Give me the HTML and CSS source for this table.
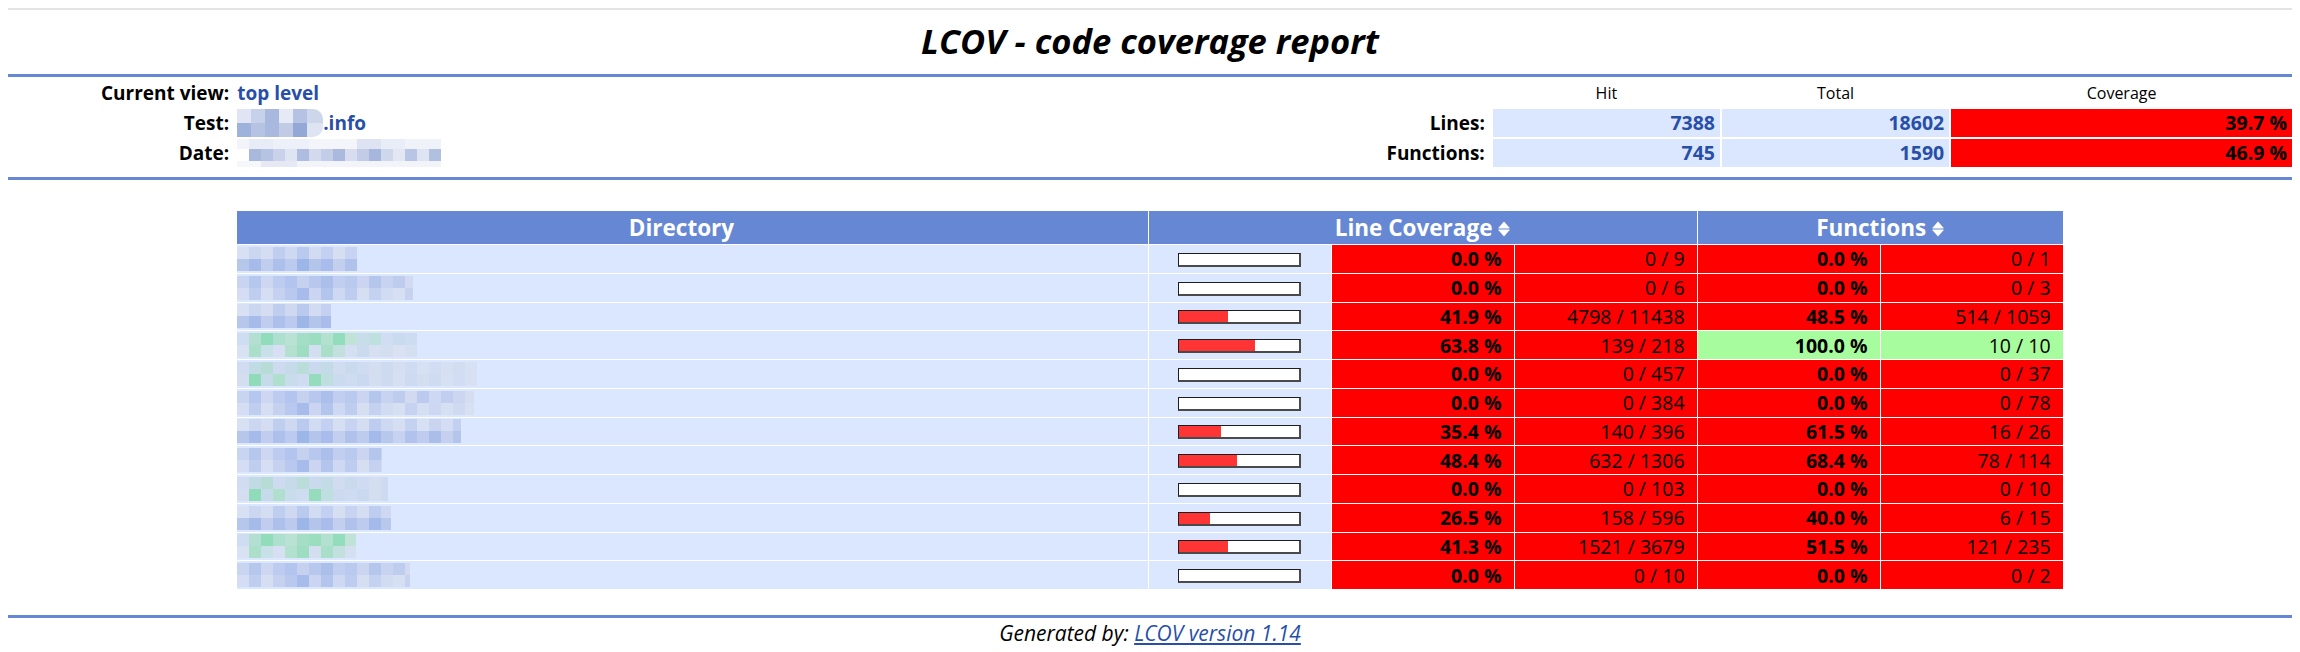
FILE: index.html
```html
<!DOCTYPE html>
<html lang="en">
<head>
<meta charset="utf-8">
<title>LCOV - code coverage report</title>
<link rel="stylesheet" href="styles.css">
</head>
<body>
<div class="topline"></div>
<h1 class="title">LCOV - code coverage report</h1>
<div class="ruler"></div>
<div class="header">
  <div class="hitem">Current view:</div>
  <div class="hvalue"><a class="hlink" href="#">top level</a></div>
  <div></div>
  <div></div>
  <div class="covhead">Hit</div>
  <div class="covhead">Total</div>
  <div class="covhead">Coverage</div>

  <div class="hitem">Test:</div>
  <div class="hvalue"><span class="mz mz-test"></span>.info</div>
  <div></div>
  <div class="hitem">Lines:</div>
  <div class="coventry">7388</div>
  <div class="coventry">18602</div>
  <div class="coventry lo">39.7 %</div>

  <div class="hitem">Date:</div>
  <div class="hvalue"><span class="mz mz-date"></span></div>
  <div></div>
  <div class="hitem">Functions:</div>
  <div class="coventry">745</div>
  <div class="coventry">1590</div>
  <div class="coventry lo">46.9 %</div>
</div>
<div class="ruler ruler-low"></div>

<table class="cov">
  <colgroup>
    <col class="c-dir"><col class="c-ten"><col class="c-ten"><col class="c-ten"><col class="c-ten"><col class="c-ten">
  </colgroup>
  <thead>
    <tr>
      <th class="th-dir">Directory</th>
      <th colspan="3">Line Coverage <svg class="sort" viewBox="0 0 12 16" width="12" height="16"><path d="M6 0.5 L11.5 6.8 Q12 7.5 11 7.5 H1 Q0 7.5 0.5 6.8 Z"/><path d="M1 8.5 H11 Q12 8.5 11.5 9.2 L6 15.5 L0.5 9.2 Q0 8.5 1 8.5 Z"/></svg></th>
      <th colspan="2">Functions <svg class="sort" viewBox="0 0 12 16" width="12" height="16"><path d="M6 0.5 L11.5 6.8 Q12 7.5 11 7.5 H1 Q0 7.5 0.5 6.8 Z"/><path d="M1 8.5 H11 Q12 8.5 11.5 9.2 L6 15.5 L0.5 9.2 Q0 8.5 1 8.5 Z"/></svg></th>
    </tr>
  </thead>
  <tbody>
    <tr><td class="file"><span class="mz mz-a w1"></span></td><td class="bar"><div class="barbox"><div class="fill" style="width:0%"></div></div></td><td class="per lo">0.0 %</td><td class="num lo">0 / 9</td><td class="per lo">0.0 %</td><td class="num lo">0 / 1</td></tr>
    <tr><td class="file"><span class="mz mz-b w2"></span></td><td class="bar"><div class="barbox"><div class="fill" style="width:0%"></div></div></td><td class="per lo">0.0 %</td><td class="num lo">0 / 6</td><td class="per lo">0.0 %</td><td class="num lo">0 / 3</td></tr>
    <tr><td class="file"><span class="mz mz-a w3"></span></td><td class="bar"><div class="barbox"><div class="fill" style="width:41%"></div></div></td><td class="per lo">41.9 %</td><td class="num lo">4798 / 11438</td><td class="per lo">48.5 %</td><td class="num lo">514 / 1059</td></tr>
    <tr><td class="file"><span class="mz mz-g w4"></span></td><td class="bar"><div class="barbox"><div class="fill" style="width:63%"></div></div></td><td class="per lo">63.8 %</td><td class="num lo">139 / 218</td><td class="per hi">100.0 %</td><td class="num hi">10 / 10</td></tr>
    <tr><td class="file"><span class="mz mz-h w5"></span></td><td class="bar"><div class="barbox"><div class="fill" style="width:0%"></div></div></td><td class="per lo">0.0 %</td><td class="num lo">0 / 457</td><td class="per lo">0.0 %</td><td class="num lo">0 / 37</td></tr>
    <tr><td class="file"><span class="mz mz-b w6"></span></td><td class="bar"><div class="barbox"><div class="fill" style="width:0%"></div></div></td><td class="per lo">0.0 %</td><td class="num lo">0 / 384</td><td class="per lo">0.0 %</td><td class="num lo">0 / 78</td></tr>
    <tr><td class="file"><span class="mz mz-a w7"></span></td><td class="bar"><div class="barbox"><div class="fill" style="width:35%"></div></div></td><td class="per lo">35.4 %</td><td class="num lo">140 / 396</td><td class="per lo">61.5 %</td><td class="num lo">16 / 26</td></tr>
    <tr><td class="file"><span class="mz mz-b w8"></span></td><td class="bar"><div class="barbox"><div class="fill" style="width:48%"></div></div></td><td class="per lo">48.4 %</td><td class="num lo">632 / 1306</td><td class="per lo">68.4 %</td><td class="num lo">78 / 114</td></tr>
    <tr><td class="file"><span class="mz mz-h w9"></span></td><td class="bar"><div class="barbox"><div class="fill" style="width:0%"></div></div></td><td class="per lo">0.0 %</td><td class="num lo">0 / 103</td><td class="per lo">0.0 %</td><td class="num lo">0 / 10</td></tr>
    <tr><td class="file"><span class="mz mz-a w10"></span></td><td class="bar"><div class="barbox"><div class="fill" style="width:26%"></div></div></td><td class="per lo">26.5 %</td><td class="num lo">158 / 596</td><td class="per lo">40.0 %</td><td class="num lo">6 / 15</td></tr>
    <tr><td class="file"><span class="mz mz-g w11"></span></td><td class="bar"><div class="barbox"><div class="fill" style="width:41%"></div></div></td><td class="per lo">41.3 %</td><td class="num lo">1521 / 3679</td><td class="per lo">51.5 %</td><td class="num lo">121 / 235</td></tr>
    <tr><td class="file"><span class="mz mz-b w12"></span></td><td class="bar"><div class="barbox"><div class="fill" style="width:0%"></div></div></td><td class="per lo">0.0 %</td><td class="num lo">0 / 10</td><td class="per lo">0.0 %</td><td class="num lo">0 / 2</td></tr>
  </tbody>
</table>

<div class="ruler ruler-foot"></div>
<div class="version">Generated by: <a class="vlink" href="#">LCOV version 1.14</a></div>
</body>
</html>
```
FILE: styles.css
```css
html {
  background: #ffffff;
}
body {
  margin: 0 8px 8px;
  color: #000000;
  font-family: "Open Sans", "Noto Sans", sans-serif;
  font-size: 19.5px;
}

.topline {
  height: 2px;
  margin: 8px -8px 0;
  background: #e4e4e4;
}

.title {
  margin: 0;
  height: 64px;
  line-height: 62px;
  text-align: center;
  font-size: 34.5px;
  font-style: italic;
  font-weight: bold;
}

.ruler {
  height: 3px;
  background: #6688d4;
}
.ruler-low {
  margin-top: 10px;
}
.ruler-foot {
  margin-top: 25px;
}

/* ---------- header block ---------- */
.header {
  display: grid;
  grid-template-columns: 10fr 35fr 5fr 15fr 10fr 10fr 15fr;
  grid-auto-rows: 28px;
  column-gap: 2px;
  row-gap: 2px;
  margin-top: 2px;
  line-height: 28px;
  white-space: nowrap;
}
.hitem {
  text-align: right;
  padding-right: 6px;
  font-weight: bold;
  font-size: 19px;
}
.hvalue {
  display: flex;
  align-items: center;
  color: #284fa8;
  font-weight: bold;
  font-size: 19px;
}
.hlink {
  color: #284fa8;
  text-decoration: none;
}
.covhead {
  text-align: center;
  font-size: 16px;
}
.coventry {
  text-align: right;
  padding-right: 5px;
  color: #284fa8;
  background: #dae7fe;
  font-weight: bold;
}
.coventry.lo {
  color: #000000;
  background: #ff0000;
}

/* ---------- coverage table ---------- */
.cov {
  width: 80%;
  margin: 30px auto 0;
  border-spacing: 1px;
  table-layout: fixed;
}
.c-dir {
  width: 50%;
}
.c-ten {
  width: 10%;
}
.cov th {
  height: 33px;
  padding: 0;
  background: #6688d4;
  color: #ffffff;
  font-size: 22.5px;
  font-weight: bold;
  white-space: nowrap;
  text-align: center;
}
.cov th.th-dir {
  padding-right: 22px;
}
.sort {
  fill: #ffffff;
  vertical-align: -1px;
}
.cov td {
  height: 27.75px;
  padding: 0;
  vertical-align: middle;
  white-space: nowrap;
}
.cov td.file {
  background: #dae7fe;
}
.cov td.bar {
  background: #dae7fe;
}
.barbox {
  box-sizing: border-box;
  width: 123px;
  height: 14px;
  margin: 2px auto 0;
  background: #ffffff;
  border: 1px solid #1e1e1e;
  border-right: 2px solid #4a4a4a;
  border-bottom: 2px solid #4a4a4a;
}
.fill {
  height: 100%;
  background: #ff3535;
}
.cov td.per,
.cov td.num {
  text-align: right;
  padding-right: 12px;
}
.cov td.per {
  font-weight: bold;
}
.cov td.lo {
  background: #ff0000;
}
.cov td.hi {
  background: #a7fc9d;
}

/* ---------- blurred (mosaic) names ---------- */
.mz {
  display: block;
  height: 26px;
}
.cov .mz {
  filter: saturate(1.35) brightness(0.96);
}
.hvalue .mz {
  display: inline-block;
  flex: none;
}
.mz-test {
  width: 86px;
  height: 28px;
  border-radius: 0 10px 10px 0;
  background:
    linear-gradient(90deg, #dfe5f4 0 14px, #c7d1ea 14px 28px, #a9b9de 28px 42px, #e6eaf5 42px 56px, #b5c2e3 56px 70px, #ced6ec 70px 86px) 0 0 / 100% 14px no-repeat,
    linear-gradient(90deg, #9fb2dc 0 14px, #b6c3e3 14px 28px, #a8b8de 28px 42px, #c2cbe6 42px 56px, #93a8d6 56px 70px, #dfe4f3 70px 86px) 0 14px / 100% 14px no-repeat;
}
.mz-date {
  width: 204px;
  height: 28px;
  background:
    linear-gradient(90deg, #f2f4fa 0 12px, #e8ecf6 12px 36px, #edf0f8 36px 72px, #f3f5fa 72px 120px, #dde3f2 120px 144px, #e9edf7 144px 168px, #f0f2f9 168px 204px) 0 0 / 100% 10px no-repeat,
    linear-gradient(90deg, #ffffff 0 12px, #a9b8dd 12px 24px, #b6c3e3 24px 36px, #c9d2ea 36px 48px, #dfe4f2 48px 60px, #aebddf 60px 72px, #d3daee 72px 84px, #c4cde8 84px 96px, #aab9dd 96px 108px, #d7ddef 108px 120px, #c2cce7 120px 132px, #a6b6dc 132px 144px, #cfd7ec 144px 156px, #e3e7f4 156px 168px, #b9c5e4 168px 180px, #dfe4f3 180px 192px, #b1bfe1 192px 204px) 0 10px / 100% 12px no-repeat,
    linear-gradient(90deg, #f6f7fb 0 24px, #e6e9f4 24px 60px, #f3f4f9 60px 204px) 0 22px / 100% 6px no-repeat;
}

.mz-a {
  background:
    linear-gradient(90deg, #e3e9f8 0 12px, #d6dff4 12px 24px, #dfe6f6 24px 36px, #cbd6f0 36px 48px, #d9e1f4 48px 60px, #c6d2ee 60px 72px, #dce4f5 72px 84px, #cfd9f2 84px 96px, #e1e8f7 96px 108px, #d3dcf3 108px 120px, #dfe6f6 120px 132px, #c9d4ef 132px 144px, #d9e1f5 144px 156px, #e1e8f7 156px 168px, #d0daf2 168px 180px, #e3e9f8 180px 192px, #d4ddf3 192px 204px, #dfe6f7 204px 216px, #cfd9f2 216px 228px, #e2e8f7 228px 240px) 0 1px / 100% 12px no-repeat,
    linear-gradient(90deg, #c3cfec 0 12px, #b3c3e7 12px 24px, #cbd5ef 24px 36px, #b9c7e9 36px 48px, #c7d2ee 48px 60px, #aabde4 60px 72px, #c0cdeb 72px 84px, #b5c4e8 84px 96px, #cfd8f1 96px 108px, #bccaea 108px 120px, #c8d3ee 120px 132px, #b0c1e6 132px 144px, #c4d0ed 144px 156px, #d2dbf2 156px 168px, #bdcaea 168px 180px, #cad4ef 180px 192px, #b7c6e8 192px 204px, #d0d9f1 204px 216px, #c0cdeb 216px 228px, #cfd8f1 228px 240px) 0 13px / 100% 12px no-repeat;
}
.mz-b {
  background:
    linear-gradient(90deg, #d4ddf3 0 12px, #c2cfed 12px 24px, #d8e0f4 24px 36px, #c8d3ef 36px 48px, #bfcced 48px 60px, #d1daf2 60px 72px, #c3cfed 72px 84px, #b8c7e9 84px 96px, #cdd7f1 96px 108px, #c6d1ee 108px 120px, #d6def4 120px 132px, #c1ceec 132px 144px, #d3dcf3 144px 156px, #cad5ef 156px 168px, #dce3f5 168px 180px, #c7d2ee 180px 192px, #d9e1f5 192px 204px, #cdd7f1 204px 216px, #d7dff4 216px 228px, #e0e7f6 228px 240px) 0 1px / 100% 12px no-repeat,
    linear-gradient(90deg, #dfe6f7 0 12px, #cbd6f0 12px 24px, #e0e7f7 24px 36px, #d1daf2 36px 48px, #c4d0ee 48px 60px, #b4c4e8 60px 72px, #d6def4 72px 84px, #bfccec 84px 96px, #d9e1f5 96px 108px, #c9d4ef 108px 120px, #e1e8f7 120px 132px, #d0daf2 132px 144px, #dce4f6 144px 156px, #e2e8f7 156px 168px, #d2dbf2 168px 180px, #e0e7f7 180px 192px, #d8e0f5 192px 204px, #e2e8f7 204px 216px, #dae2f5 216px 228px, #e3e9f8 228px 240px) 0 13px / 100% 12px no-repeat;
}
.mz-g {
  background:
    linear-gradient(90deg, #dbe6f6 0 12px, #c4e6dc 12px 24px, #a6e0c6 24px 36px, #bfe6d8 36px 48px, #c9e9de 48px 60px, #b8e4d1 60px 72px, #aee2cb 72px 84px, #c3e7da 84px 96px, #a9e1c8 96px 108px, #cfeae2 108px 120px, #d4e6ef 120px 132px, #cde7e6 132px 144px, #dce6f6 144px 156px, #d6e4f3 156px 168px, #dae5f6 168px 180px) 0 1px / 100% 12px no-repeat,
    linear-gradient(90deg, #e4ebf8 0 12px, #bde5d5 12px 24px, #d6e9ef 24px 36px, #e1e9f7 36px 48px, #c4e6d9 48px 60px, #b2e2cd 60px 72px, #dfe8f6 72px 84px, #bbe4d3 84px 96px, #d0e8e6 96px 108px, #e0e8f7 108px 120px, #d8e3f4 120px 132px, #e2e9f7 132px 144px, #dfe7f6 144px 156px, #e4eaf8 156px 168px, #e0e8f7 168px 180px) 0 13px / 100% 12px no-repeat;
}
.mz-h {
  background:
    linear-gradient(90deg, #dce4f5 0 12px, #cfe3ea 12px 24px, #c6e3de 24px 36px, #dae3f4 36px 48px, #d3e3ee 48px 60px, #c9e4e1 60px 72px, #d6e2f2 72px 84px, #d0e3ec 84px 96px, #dde5f5 96px 108px, #d5e2f1 108px 120px, #dbe4f5 120px 132px, #e0e7f6 132px 144px, #d9e3f4 144px 156px, #e1e8f7 156px 168px, #dbe4f5 168px 180px, #e3e9f8 180px 192px, #dde5f6 192px 204px, #e2e8f7 204px 216px, #dee6f6 216px 228px, #e3e9f8 228px 240px) 0 1px / 100% 12px no-repeat,
    linear-gradient(90deg, #e0e7f6 0 12px, #a5dfc4 12px 24px, #d3e3ee 24px 36px, #c2e5d7 36px 48px, #d5e4f0 48px 60px, #dbe4f5 60px 72px, #a9e0c7 72px 84px, #cde5e6 84px 96px, #d8e3f3 96px 108px, #dae4f5 108px 120px, #d6e2f3 120px 132px, #dfe7f6 132px 144px, #d9e3f4 144px 156px, #e2e8f7 156px 168px, #dae3f4 168px 180px, #e0e7f6 180px 192px, #dbe4f5 192px 204px, #e3e9f8 204px 216px, #dde5f6 216px 228px, #e3e9f8 228px 240px) 0 13px / 100% 12px no-repeat;
}
.w1 { width: 120px; }
.w2 { width: 176px; }
.w3 { width: 94px; }
.w4 { width: 180px; }
.w5 { width: 240px; }
.w6 { width: 237px; }
.w7 { width: 224px; }
.w8 { width: 145px; }
.w9 { width: 151px; }
.w10 { width: 154px; }
.w11 { width: 119px; }
.w12 { width: 173px; }

/* ---------- footer ---------- */
.version {
  padding-top: 2px;
  line-height: 26px;
  text-align: center;
  font-size: 21px;
  font-style: italic;
}
.vlink {
  color: #284fa8;
  text-decoration: underline;
}
```
